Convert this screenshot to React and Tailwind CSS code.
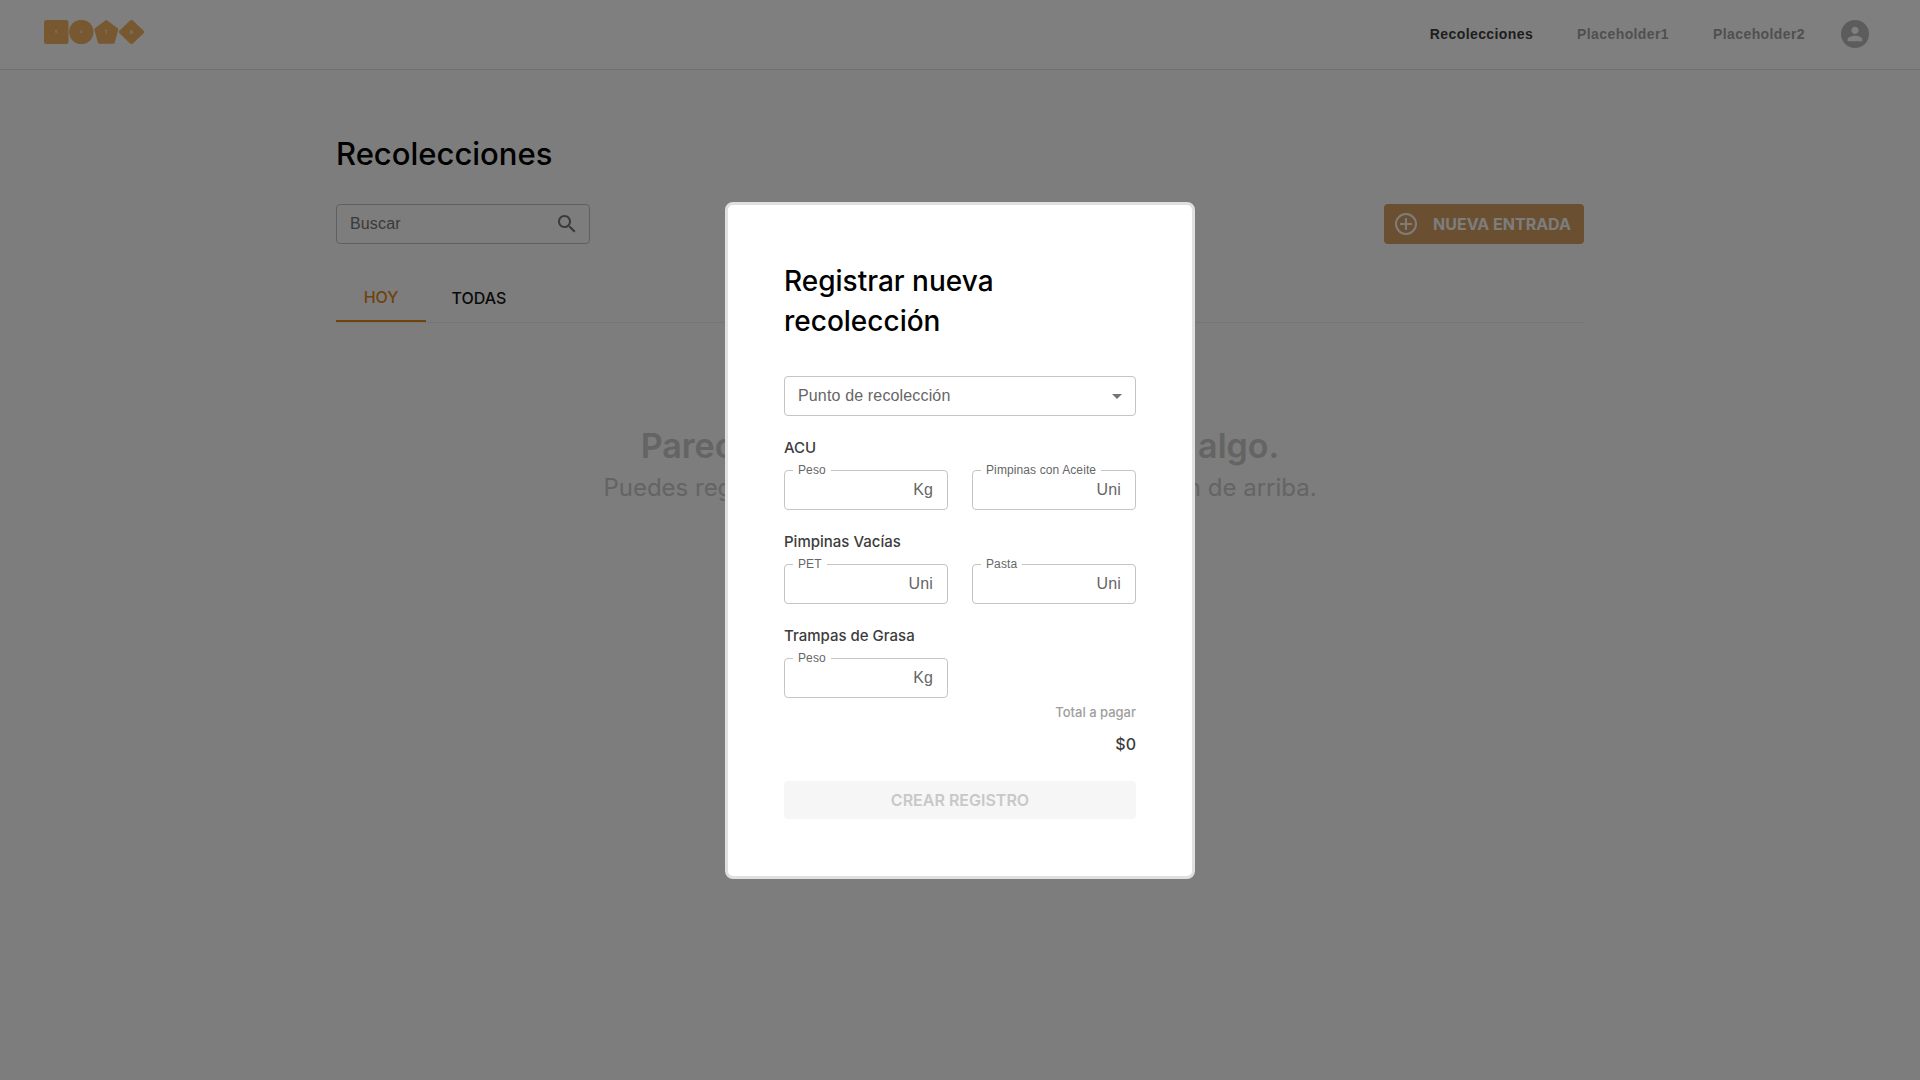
import React from "react";

const ARIAL = "font-['Liberation_Sans',Arial,sans-serif]";

function Logo() {
  return (
    <svg className="h-6 w-[101px]" viewBox="0 0 101 24" aria-label="RUTA">
      <g fill="#eeb062">
        <rect width="24.5" height="24" rx="2.5" />
        <circle cx="37.3" cy="12" r="12.2" />
        <path
          d="M62.3 1 L73.4 9.2 L69.6 22.8 H55 L51.2 9.2 Z"
          stroke="#eeb062"
          strokeWidth="2"
          strokeLinejoin="round"
        />
        <path
          d="M87.5 2 L98 12 L87.5 22 L77 12 Z"
          stroke="#eeb062"
          strokeWidth="4"
          strokeLinejoin="round"
        />
      </g>
      <g fill="#ffffff" fontFamily="Inter, sans-serif" textAnchor="middle" opacity="0.75">
        <text x="12.2" y="13.3" fontSize="3.4" fontWeight="700">R</text>
        <text x="37.3" y="13.4" fontSize="4" fontWeight="600">U</text>
        <text x="62.3" y="13.8" fontSize="5.4" fontWeight="600">T</text>
        <text x="87.5" y="13.8" fontSize="5.4" fontWeight="600">A</text>
      </g>
    </svg>
  );
}

function Avatar() {
  return (
    <div className="flex size-7 items-center justify-center rounded-full bg-[#b9b9b9]">
      <svg className="mr-px size-[22px]" viewBox="0 0 24 24" fill="#ffffff">
        <path d="M12 12c2.21 0 4-1.79 4-4s-1.79-4-4-4-4 1.79-4 4 1.79 4 4 4zm0 2c-2.67 0-8 1.34-8 4v2h16v-2c0-2.66-5.33-4-8-4z" />
      </svg>
    </div>
  );
}

function Header() {
  return (
    <header className="flex h-[70px] items-center justify-between border-b border-[#e0e0e0] bg-white pr-[51px] pl-11">
      <div className="-mt-[5px]">
        <Logo />
      </div>
      <nav className="-mt-px flex items-center text-[14px] font-bold tracking-[0.4px] text-[#a0a0a0] font-['Liberation_Sans',Arial,sans-serif]">
        <a className="mr-11 text-[#3c3c3c]">Recolecciones</a>
        <a className="mr-11">Placeholder1</a>
        <a className="mr-9">Placeholder2</a>
        <Avatar />
      </nav>
    </header>
  );
}

function SearchBox() {
  return (
    <div className={"flex h-10 w-[254px] items-center justify-between rounded border border-[#c1c1c1] pr-[10px] pl-[13px] " + ARIAL}>
      <span className="text-base tracking-[0.15px] text-[#757575]">Buscar</span>
      <svg className="size-6" viewBox="0 0 24 24" fill="#757575">
        <path d="M15.5 14h-.79l-.28-.27C15.41 12.59 16 11.11 16 9.5 16 5.91 13.09 3 9.5 3S3 5.91 3 9.5 5.91 16 9.5 16c1.61 0 3.09-.59 4.23-1.57l.27.28v.79l5 4.99L20.49 19l-4.99-5zm-6 0C7.01 14 5 11.99 5 9.5S7.01 5 9.5 5 14 7.01 14 9.5 11.99 14 9.5 14z" />
      </svg>
    </div>
  );
}

function Field({ label, unit }) {
  return (
    <div className={"relative flex h-10 w-[164px] items-center justify-end rounded border border-[#c4c4c4] pr-[14px] " + ARIAL}>
      <span className="absolute -top-[9px] left-2 bg-white px-[5px] text-xs leading-4 tracking-[0.11px] whitespace-nowrap text-[#666666]">
        {label}
      </span>
      <span className="text-base tracking-[0.15px] text-[#666666]">{unit}</span>
    </div>
  );
}

function Group({ title, children }) {
  return (
    <section className="flex h-[94px] flex-col">
      <h3 className="mb-2.5 text-[15px] leading-6 font-medium text-[#3c3c3c]">{title}</h3>
      <div className="flex gap-6">{children}</div>
    </section>
  );
}

function Modal() {
  return (
    <div className="fixed inset-0 flex items-center justify-center bg-black/50">
      <div className="h-[677px] w-[470px] rounded-lg border-[3px] border-[#e0e0e0] bg-white p-14">
        <h2 className="w-[352px] pr-20 text-[28px] leading-10 font-medium text-black">
          Registrar nueva recolección
        </h2>
        <div className={"mt-[35px] flex h-10 items-center justify-between rounded border border-[#c4c4c4] pr-[6px] pl-[13px] " + ARIAL}>
          <span className="text-base tracking-[0.15px] text-[#666666]">Punto de recolección</span>
          <svg className="size-6" viewBox="0 0 24 24" fill="#757575">
            <path d="M7 10l5 5 5-5z" />
          </svg>
        </div>
        <div className="mt-5">
          <Group title="ACU">
            <Field label="Peso" unit="Kg" />
            <Field label="Pimpinas con Aceite" unit="Uni" />
          </Group>
          <Group title="Pimpinas Vacías">
            <Field label="PET" unit="Uni" />
            <Field label="Pasta" unit="Uni" />
          </Group>
          <Group title="Trampas de Grasa">
            <Field label="Peso" unit="Kg" />
          </Group>
        </div>
        <div className="-mt-[18px] text-right font-medium">
          <p className="text-[13px] leading-6 text-[#9e9e9e]">Total a pagar</p>
          <p className="mt-2 text-base leading-6 text-[#3c3c3c]">$0</p>
        </div>
        <button className="mt-[25px] h-[38px] w-full rounded bg-[#f6f6f6] text-base font-semibold text-[#c8c8c8]">
          CREAR REGISTRO
        </button>
      </div>
    </div>
  );
}

export default function App() {
  return (
    <div className="h-screen overflow-hidden bg-[#fafafa] font-['Inter',sans-serif]">
      <Header />
      <main className="mx-auto w-[1248px] pt-[64px]">
        <h1 className="text-[31px] leading-10 font-medium text-black">Recolecciones</h1>
        <div className="mt-[30px] flex justify-between">
          <SearchBox />
          <button className="flex h-10 w-[200px] items-center rounded bg-[#d49e60] pl-[11px] text-base font-bold text-[#fafafa]">
            <svg className="mr-4 size-[22px]" viewBox="0 0 22 22" fill="none" stroke="#fafafa" strokeWidth="2">
              <circle cx="11" cy="11" r="10" />
              <path d="M11 5v12M5 11h12" />
            </svg>
            NUEVA ENTRADA
          </button>
        </div>
        <div className="mt-[30px] flex h-[49px] border-b border-[#ebebeb] text-base font-medium">
          <div className="flex h-12 w-[90px] items-center justify-center border-b-2 border-[#e08418] text-[#e08418]">
            HOY
          </div>
          <div className="flex h-12 w-[106px] items-center justify-center text-[#141414]">TODAS</div>
        </div>
        <div className="mt-[99px] flex flex-col items-center whitespace-nowrap text-[#c8c8c8]">
          <p className="text-[34px] leading-[48px] font-semibold">Parece que aún no has registrado algo.</p>
          <p className="text-2xl leading-9">Puedes registrar una nueva recolección con el boton de arriba.</p>
        </div>
      </main>
      <Modal />
    </div>
  );
}
